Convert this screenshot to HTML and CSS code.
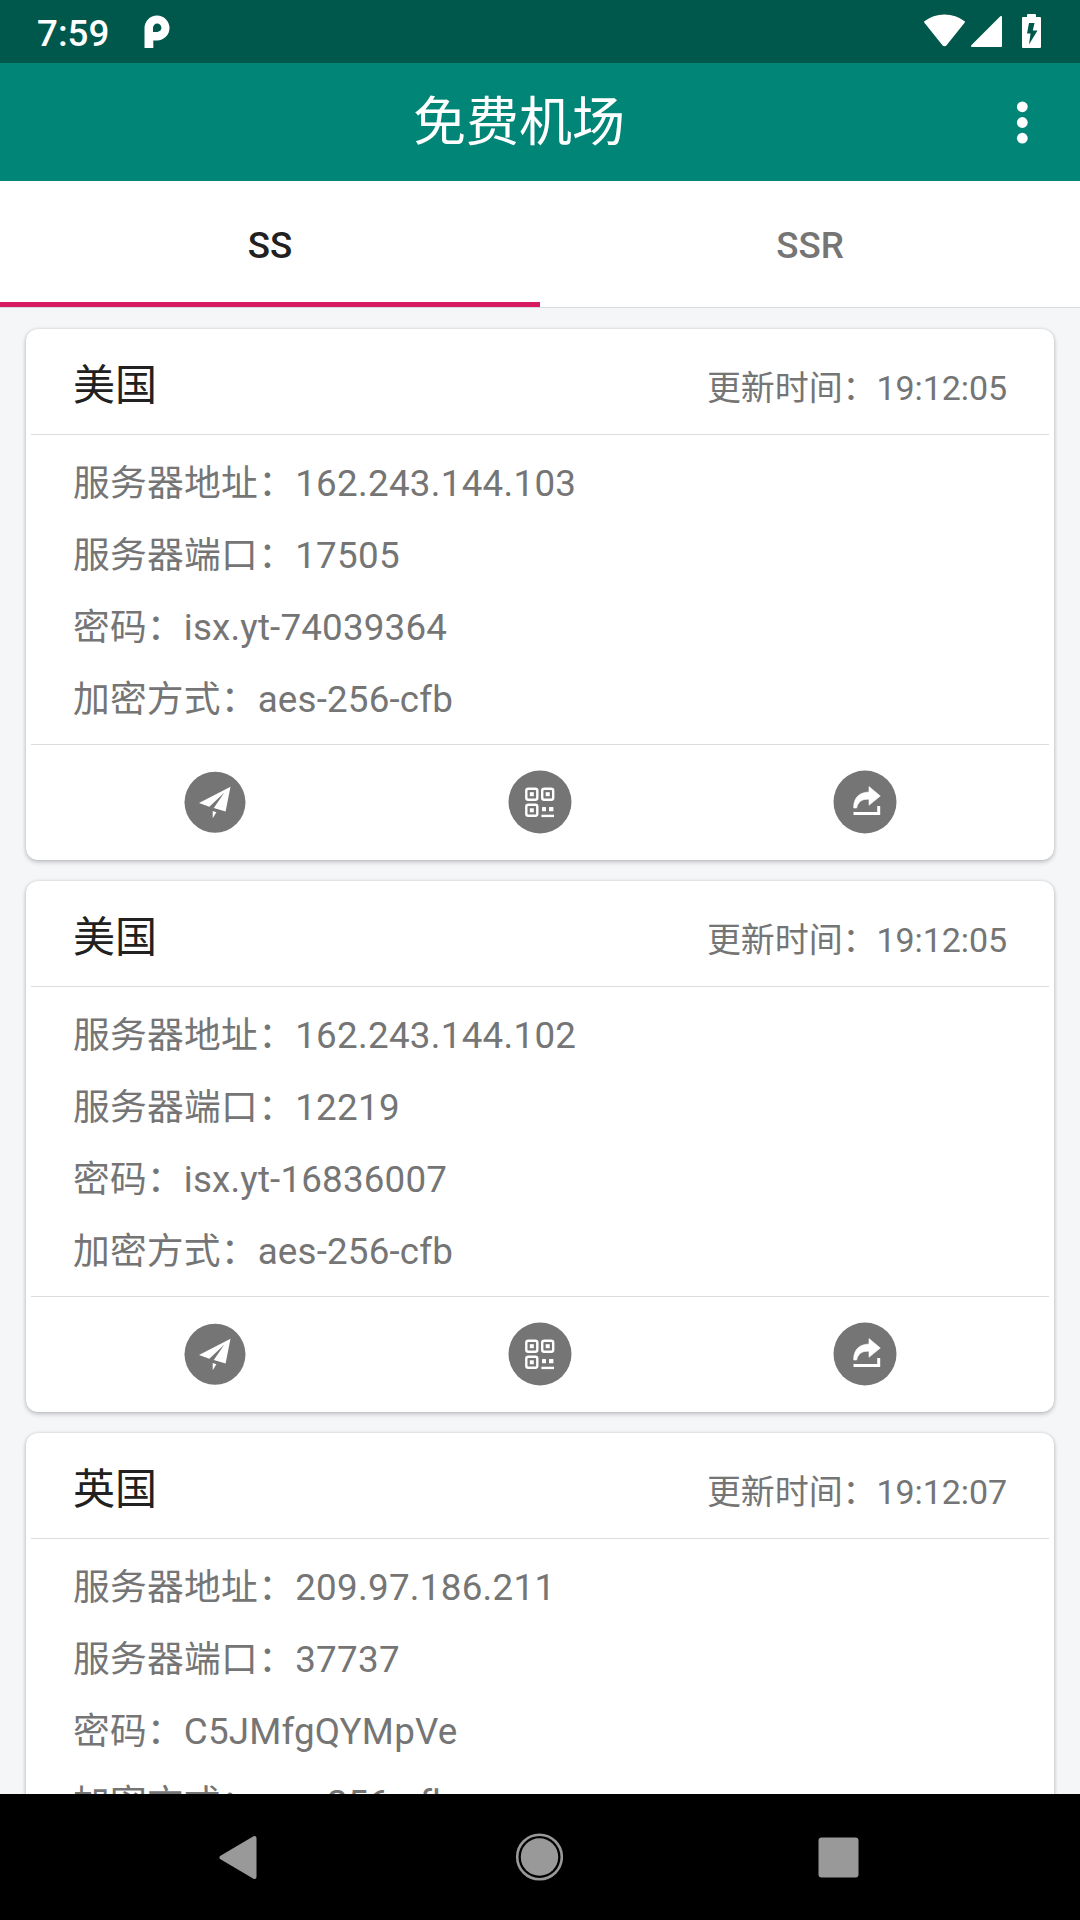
FILE: index.html
```html
<!DOCTYPE html>
<html lang="zh-CN">
<head>
  <meta charset="UTF-8">
  <meta name="viewport" content="width=device-width, initial-scale=1.0">
  <title>免费机场</title>
  <link rel="stylesheet" href="styles.css">
</head>
<body>
  <!-- shared card icons -->
  <svg class="defs">
    <symbol id="icon-send" viewBox="0 0 64 64">
      <circle cx="32" cy="32.3" r="30.5" fill="#757575"/>
      <path fill="#fff" d="M47.5 16.8 L16 33 L26.3 36.8 L41.2 22.8 L30.8 38 L42.6 41.6 Z M29.7 41 V48.2 L33.4 42.2 Z"/>
    </symbol>
    <symbol id="icon-qr" viewBox="0 0 64 64">
      <circle cx="32" cy="32" r="31.5" fill="#757575"/>
      <g fill="none" stroke="#fff" stroke-width="2.4">
        <rect x="18.3" y="18.7" width="11" height="11" rx="2"/>
        <rect x="34.2" y="18.7" width="11" height="11" rx="2"/>
        <rect x="18.3" y="34.8" width="11" height="11" rx="2"/>
      </g>
      <g fill="#fff">
        <rect x="21.8" y="22.2" width="4" height="4"/>
        <rect x="37.7" y="22.2" width="4" height="4"/>
        <rect x="21.8" y="38.3" width="4" height="4"/>
        <rect x="34" y="37" width="4" height="4.2" rx=".5"/>
        <rect x="41" y="37" width="4.4" height="4.2" rx=".5"/>
        <rect x="33.4" y="44.7" width="12.6" height="2.4"/>
      </g>
    </symbol>
    <symbol id="icon-share" viewBox="0 0 64 64">
      <circle cx="32" cy="32" r="31.5" fill="#757575"/>
      <path fill="#fff" d="M36 16.6 L47.3 26 L36 35.2 V29.2 C28.5 28.8 25 32 23.6 38 H20.7 C20.5 28.5 25.5 22.4 36 22 Z" stroke="#fff" stroke-width=".6"/>
      <path fill="none" stroke="#fff" stroke-width="3" d="M20.5 43.5 H45.7 V36"/>
    </symbol>
  </svg>

  <div class="status-bar">
    <span class="clock">7:59</span>
    <svg class="app-icon" width="26" height="34" viewBox="0 0 26 34">
      <path fill="#fff" fill-rule="evenodd" d="M.5 33 V13 A12.5 12.5 0 1 1 13 25.5 H9.3 V33 Z M9 17 V13 A4.2 4.2 0 1 1 13 17 Z"/>
    </svg>
    <svg class="status-icons" width="120" height="36" viewBox="0 0 120 36">
      <g fill="#fff" stroke="#fff" stroke-width="2" stroke-linejoin="round">
        <path d="M2 8 C13 -.8 30 -.8 41 8 L23 30.5 Q21.5 31.8 20 30.5 Z"/>
        <path d="M49 32 L78 3 V32 Z"/>
        <path d="M100 4 H105 V1 H112 V4 H117 V33 H100 Z"/>
      </g>
      <path fill="#00574b" d="M106 9 H111.5 L109.8 16.5 H114.5 L106 30.5 L107.5 19.5 H104 Z"/>
    </svg>
  </div>

  <div class="toolbar">
    <h1>免费机场</h1>
    <svg width="42" height="48" viewBox="0 0 42 48">
      <g fill="#fff">
        <circle cx="21.3" cy="8.8" r="5.4"/>
        <circle cx="21.3" cy="24.5" r="5.4"/>
        <circle cx="21.3" cy="40.2" r="5.4"/>
      </g>
    </svg>
  </div>

  <div class="tabs">
    <div class="tab active">SS</div>
    <div class="tab">SSR</div>
  </div>

  <div class="list">
    <div class="card">
      <div class="card-head">
        <h2>美国</h2>
        <span class="time">更新时间：19:12:05</span>
      </div>
      <div class="card-body">
        <p class="num">服务器地址：162.243.144.103</p>
        <p class="num">服务器端口：17505</p>
        <p>密码：isx.yt-74039364</p>
        <p>加密方式：aes-256-cfb</p>
      </div>
      <div class="card-actions">
        <svg class="icon"><use href="#icon-send"/></svg>
        <svg class="icon"><use href="#icon-qr"/></svg>
        <svg class="icon"><use href="#icon-share"/></svg>
      </div>
    </div>

    <div class="card">
      <div class="card-head">
        <h2>美国</h2>
        <span class="time">更新时间：19:12:05</span>
      </div>
      <div class="card-body">
        <p class="num">服务器地址：162.243.144.102</p>
        <p class="num">服务器端口：12219</p>
        <p>密码：isx.yt-16836007</p>
        <p>加密方式：aes-256-cfb</p>
      </div>
      <div class="card-actions">
        <svg class="icon"><use href="#icon-send"/></svg>
        <svg class="icon"><use href="#icon-qr"/></svg>
        <svg class="icon"><use href="#icon-share"/></svg>
      </div>
    </div>

    <div class="card">
      <div class="card-head">
        <h2>英国</h2>
        <span class="time">更新时间：19:12:07</span>
      </div>
      <div class="card-body">
        <p class="num">服务器地址：209.97.186.211</p>
        <p class="num">服务器端口：37737</p>
        <p>密码：C5JMfgQYMpVe</p>
        <p>加密方式：aes-256-cfb</p>
      </div>
    </div>
  </div>

  <div class="nav-bar">
    <svg width="48" height="48" viewBox="0 0 48 48">
      <path fill="#999" stroke="#999" stroke-width="4" stroke-linejoin="round" d="M7.5 24.5 L40.5 5 V44 Z"/>
    </svg>
    <svg width="48" height="48" viewBox="0 0 48 48">
      <circle cx="24.5" cy="24" r="22.3" fill="none" stroke="#999" stroke-width="2.6"/>
      <circle cx="24.5" cy="24" r="18.7" fill="#999"/>
    </svg>
    <svg width="48" height="48" viewBox="0 0 48 48">
      <rect x="3.5" y="4.5" width="40" height="40" rx="3" fill="#999"/>
    </svg>
  </div>
</body>
</html>
```
FILE: styles.css
```css
* {
  box-sizing: border-box;
}
body {
  margin: 0;
  width: 1080px;
  height: 1920px;
  overflow: hidden;
  display: flex;
  flex-direction: column;
  font-family: Roboto, "Noto Sans CJK SC", sans-serif;
  font-size: 36.75px;
  color: #757575;
  background: #f5f6f8;
}
h1, h2, p {
  margin: 0;
  font-weight: 400;
}
svg {
  display: block;
  flex: none;
}
.defs {
  display: none;
}
.status-bar {
  flex: none;
  height: 63px;
  display: flex;
  align-items: center;
  padding: 0 37px;
  background: #00574b;
  color: #fff;
}
.clock {
  width: 107px;
  font-weight: 500;
  line-height: 63px;
  padding-top: 3px;
}
.status-icons {
  margin-left: auto;
}
.toolbar {
  flex: none;
  height: 118px;
  display: flex;
  align-items: center;
  padding: 0 37px;
  background: #008577;
}
.toolbar h1 {
  flex: 1;
  text-align: center;
  font-size: 53px;
  line-height: 118px;
  padding-top: 2px;
  color: #fff;
}
.tabs {
  flex: none;
  height: 127px;
  display: flex;
  background: #fff;
  border-bottom: 1px solid #d9dbde;
}
.tab {
  flex: 1;
  text-align: center;
  font-weight: 500;
  line-height: 130px;
}
.tab.active {
  height: 126px;
  color: #212121;
  border-bottom: 5px solid #d81b60;
}
.list {
  flex: 1;
  min-height: 0;
  overflow: hidden;
  display: flex;
  flex-direction: column;
  gap: 21px;
  padding: 21px 26px 0;
}
.card {
  flex: none;
  height: 531px;
  padding: 0 5px;
  background: #fff;
  border-radius: 12px;
  box-shadow: 0 2px 5px rgba(0,0,0,0.22), 0 0 3px rgba(0,0,0,0.12);
}
.card-head {
  height: 106px;
  display: flex;
  justify-content: space-between;
  padding: 0 42px;
  border-bottom: 1px solid #dcdcdc;
}
.card-head h2 {
  font-size: 42px;
  line-height: 114px;
  color: #212121;
}
.time {
  font-size: 34px;
  letter-spacing: -0.08px;
  line-height: 118px;
}
.card-body {
  height: 310px;
  padding: 13px 42px 0;
  border-bottom: 1px solid #dcdcdc;
}
.card-body p {
  line-height: 72px;
  letter-spacing: 0.18px;
}
.card-body .num {
  letter-spacing: 0.28px;
}
.card-actions {
  height: 114px;
  display: flex;
  align-items: center;
  justify-content: space-around;
  padding: 0 22px 0 21px;
}
.icon {
  width: 64px;
  height: 64px;
}
.nav-bar {
  flex: none;
  height: 126px;
  display: flex;
  align-items: center;
  justify-content: space-between;
  padding: 0 217px 1px 214px;
  background: #000;
}
```
